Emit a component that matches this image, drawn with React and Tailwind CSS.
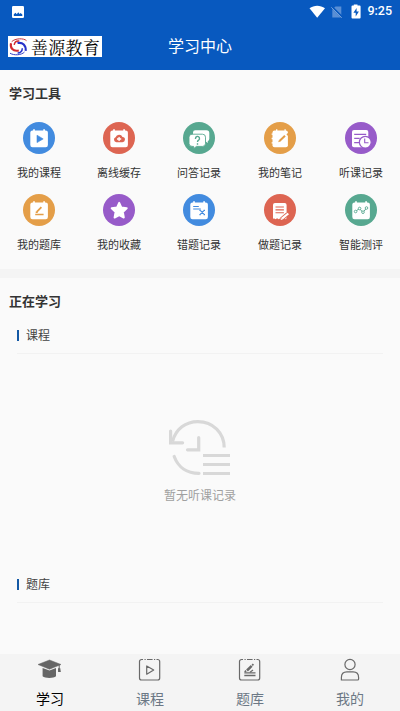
import React from "react";

const BLUE = "#428bdf";
const RED = "#dd6552";
const GREEN = "#57a890";
const ORANGE = "#e49e48";
const PURPLE = "#975bc9";

function Disc({ color, children }) {
  return (
    <svg width="32" height="32" viewBox="0 0 32 32" fill="none" className="block">
      <circle cx="16" cy="16" r="16" fill={color} />
      {children}
    </svg>
  );
}

function Calendar() {
  return (
    <>
      <rect x="7.3" y="8.6" width="17.6" height="16.7" rx="2.2" fill="#fff" />
      <path d="M11 7.2v2.4M21.1 7.2v2.4" stroke="#fff" strokeWidth="1.7" />
    </>
  );
}

const tools = [
  {
    label: "我的课程",
    icon: (
      <Disc color={BLUE}>
        <Calendar />
        <path d="M14 13.2v7.4l6.2-3.7z" fill={BLUE} stroke={BLUE} strokeWidth=".6" strokeLinejoin="round" />
      </Disc>
    ),
  },
  {
    label: "离线缓存",
    icon: (
      <Disc color={RED}>
        <Calendar />
        <path d="M13.4 20.3a2.6 2.6 0 0 1-.8-5 3.7 3.7 0 0 1 6.9-.2 2.6 2.6 0 0 1-.3 5.2z" fill={RED} />
        <path d="M16.1 14.9v4.2M14 17h4.2" stroke="#fff" strokeWidth="1.3" />
      </Disc>
    ),
  },
  {
    label: "问答记录",
    icon: (
      <Disc color={GREEN}>
        <path d="M12.2 8.2h11.3a2.8 2.8 0 0 1 2.8 2.8v5.8a2.8 2.8 0 0 1-1.6 2.5l.2 1.8-3-2.1H10V10.4a2.2 2.2 0 0 1 2.2-2.2z" fill="#fff" />
        <path d="M9 12.2h10.5a3 3 0 0 1 3 3v6.2a3 3 0 0 1-3 3h-6.1l-2.5 2.1-.3-2.1H9a3 3 0 0 1-3-3v-6.2a3 3 0 0 1 3-3z" fill="#fff" stroke={GREEN} strokeWidth=".9" />
        <path d="M12.5 17v-.4a2 2 0 1 1 3.1 1.5c-.8.5-1.1.8-1.1 1.8M14.5 21.2v1.6" stroke={GREEN} strokeWidth="1.4" />
      </Disc>
    ),
  },
  {
    label: "我的笔记",
    icon: (
      <Disc color={ORANGE}>
        <rect x="8.5" y="8.5" width="15.4" height="16.8" rx="2" fill="#fff" />
        <path d="M12.7 7.2v2.4M21.1 7.2v2.4M7.6 12.2h3M7.6 16.5h3M7.6 20.8h3" stroke="#fff" strokeWidth="1.3" />
        <path d="M15.5 18.9l5.5-5.1" stroke={ORANGE} strokeWidth="2" />
        <path d="M14.2 20.2l.7-2 1.4 1.4zM22.4 12.3l1.6-1.4v3z" fill={ORANGE} />
      </Disc>
    ),
  },
  {
    label: "听课记录",
    icon: (
      <Disc color={PURPLE}>
        <rect x="7" y="8.1" width="16.3" height="17.1" rx="2" fill="#fff" />
        <path d="M9.2 12.3h12M9.2 16.4h5.5M9.2 20.7h4.8" stroke={PURPLE} strokeWidth="1.2" />
        <circle cx="20.3" cy="20.2" r="5.9" fill="#fff" stroke={PURPLE} strokeWidth="1.2" />
        <path d="M19.7 16.5v4.2h3.8" stroke={PURPLE} strokeWidth="1.1" />
      </Disc>
    ),
  },
  {
    label: "我的题库",
    icon: (
      <Disc color={ORANGE}>
        <Calendar />
        <path d="M13.8 17.9l4.6-4.8" stroke={ORANGE} strokeWidth="1.8" />
        <path d="M12.7 18.3h2M12.2 20.4h8.4" stroke={ORANGE} strokeWidth="1.5" />
      </Disc>
    ),
  },
  {
    label: "我的收藏",
    icon: (
      <Disc color={PURPLE}>
        <path d="M16.2 8.9l2.2 4.7 5.3.7-3.9 3.6 1 5.6-4.6-2.3-4.6 2.3 1-5.6-3.9-3.6 5.3-.7z" fill="#fff" stroke="#fff" strokeWidth="2" strokeLinejoin="round" />
      </Disc>
    ),
  },
  {
    label: "错题记录",
    icon: (
      <Disc color={BLUE}>
        <Calendar />
        <path d="M10.2 12.5h5.6M10.2 15h7.6" stroke={BLUE} strokeWidth="1.1" />
        <path d="M17 16.2l4.4 4.4M21.4 16.2L17 20.6M16.4 16.3h1.4M20.6 16.3h1.4M16.4 20.7h1.4M20.6 20.7h1.4" stroke={BLUE} strokeWidth="1.2" />
      </Disc>
    ),
  },
  {
    label: "做题记录",
    icon: (
      <Disc color={RED}>
        <path d="M11 9h9.6a2 2 0 0 1 2 2v13.2l-1.5 1-1.6-1-1.6 1-1.6-1-1.6 1-1.6-1-1.6 1-1.6-1-.9.9V11a2 2 0 0 1 2-2z" fill="#fff" />
        <path d="M11.5 13h8.4M11.5 15.9h8.4M11.5 18.8h8.4" stroke={RED} strokeWidth="1.1" />
        <path d="M17.4 25.2l6.2-5.2" stroke={RED} strokeWidth="4" />
        <path d="M18 24.7l6.3-5.2" stroke="#fff" strokeWidth="2.2" />
        <path d="M16.6 26l.7-2 1.4 1.6z" fill="#fff" />
      </Disc>
    ),
  },
  {
    label: "智能测评",
    icon: (
      <Disc color={GREEN}>
        <Calendar />
        <path d="M11.2 16.8l2.8-1.8M15.3 15.3l2 2.6M18.8 17.5l2-2.6" stroke={GREEN} strokeWidth="1" />
        <g stroke={GREEN} strokeWidth=".9" fill="#fff">
          <circle cx="10.6" cy="17.5" r="1.3" />
          <circle cx="14.6" cy="14.5" r="1.3" />
          <circle cx="18" cy="18.2" r="1.3" />
          <circle cx="21.5" cy="14" r="1.3" />
        </g>
      </Disc>
    ),
  },
];

function StatusBar() {
  return (
    <div className="flex h-[23px] items-center pl-3 pr-2 text-white">
      <svg width="12" height="12" viewBox="0 0 12 12" className="block">
        <rect width="12" height="12" rx="1.2" fill="#fff" />
        <path d="M1.8 10V8.3l1.7-1.5 1.3 1.4 1.5-2 1.3 1.7 1-1 1.7 1.7V10z" fill="#0859bf" />
      </svg>
      <svg width="52" height="16" viewBox="0 0 52 16" className="ml-auto mr-[6px] block">
        <path d="M.5 4.3C5 .8 11.4.8 16 4.3L8.2 13.8z" fill="#fff" />
        <path d="M26.5 2.5h5.8v11h-9v-8z" fill="#5a8fd5" />
        <path d="M22.8 2.8L34 14" stroke="#0859bf" strokeWidth="2.2" />
        <path d="M22.3 3.3l10.5 10.5" stroke="#72a0dc" strokeWidth="1" />
        <path d="M44.8.5h3.7v1h2.1a1 1 0 0 1 1 1v11a1 1 0 0 1-1 1h-7.1a1 1 0 0 1-1-1v-11a1 1 0 0 1 1-1h1.3z" fill="#fff" />
        <path d="M47.6 4l-3.2 4.7h2.3v3.8l3.2-5.1h-2.3z" fill="#0859bf" />
      </svg>
      <span className="font-[Roboto,sans-serif] text-[12.5px] font-medium leading-none">9:25</span>
    </div>
  );
}

function Logo() {
  return (
    <div className="flex h-[21px] w-[94px] items-center bg-white pl-[1px] text-black">
      <svg width="19" height="19" viewBox="0 0 19 19" fill="none" className="block shrink-0">
        <path d="M17.5 3.7C14.8.9 6 1.2 2.7 4.7" stroke="#c8323c" strokeWidth="1" />
        <path d="M2 6.2c-1 4.5 1.7 8.7 7.8 7.3" stroke="#d22b32" strokeWidth="2.1" />
        <path d="M5.2 7.8C5.7 5 8 3.700 10.3 4" stroke="#d22b32" strokeWidth="1.5" />
        <path d="M1 16.2c4 2.5 11.5 2 14.5-1.2" stroke="#3440c8" strokeWidth="1" />
        <path d="M8.5 6.1c5.3-1.200 8.600 2.500 8.200 7.800" stroke="#2732c9" strokeWidth="2.1" />
        <path d="M13.300 11.200c0 3-2 5-4.700 4.900" stroke="#2732c9" strokeWidth="1.500" />
      </svg>
      <span className="ml-[3px] whitespace-nowrap font-['Noto_Serif_CJK_SC','Noto_Sans_CJK_SC',serif] text-[17px] font-normal leading-[20px] tracking-[0.3px]">善源教育</span>
    </div>
  );
}

function Section({ title }) {
  return (
    <div className="mx-[17px] flex h-9 items-center border-b border-[#f2f2f2]">
      <span className="h-[11px] w-[2px] bg-[#1459a5]" />
      <span className="ml-[7px] pb-[1px] text-[12px] leading-none text-[#444]">{title}</span>
    </div>
  );
}

function EmptyIcon() {
  return (
    <svg width="64" height="58" viewBox="0 0 64 58" fill="none" stroke="#d8d8d8" strokeWidth="3.2" className="block">
      <path d="M4.5 22.5C8 10 17.500 2.600 30 2.600c15 0 26.200 11.400 26.200 25.900" />
      <path d="M2.600 12v11.800h12" strokeLinecap="round" />
      <path d="M6.200 37.500C10 48 19 54.300 31 54.300" strokeLinecap="round" />
      <path d="M30.700 18.500v12.300H19.500" strokeLinecap="round" />
      <path d="M35 36.500h27M35 45.500h27M35 54.500h27" />
    </svg>
  );
}

function FrameIcon({ children }) {
  return (
    <svg width="24" height="24" viewBox="0 0 24 24" fill="none" stroke="#696969" strokeWidth="1.2" className="block">
      <path d="M5 2.500H3.500a2 2 0 0 0-2 2V21a2 2 0 0 0 2 2h16.200a2 2 0 0 0 2-2V4.500a2 2 0 0 0-2-2h-1.200M6.500 2.500h1.200M9 2.500h5.600M16 2.500h1.200" />
      {children}
    </svg>
  );
}

const tabs = [
  {
    label: "学习",
    icon: (
      <svg width="24" height="24" viewBox="0 0 24 24" fill="#666" className="block">
        <path d="M0 7.500L11.500 3 23 7.500l-11.500 4.700z" stroke="#666" strokeWidth=".5" strokeLinejoin="round" />
        <path d="M4.600 11l6.900 2.500 6.500-2.500v8.200c-2.300 2.300-11 2.300-13.400 0z" />
        <path d="M21.200 8v6" stroke="#666" strokeWidth="1" />
        <path d="M20 11.300h2.300l.5 3.600h-2.700z" />
      </svg>
    ),
  },
  {
    label: "课程",
    icon: (
      <FrameIcon>
        <path d="M8.700 9v8.200l7-4.100z" strokeLinejoin="round" />
      </FrameIcon>
    ),
  },
  {
    label: "题库",
    icon: (
      <FrameIcon>
        <path d="M9 13.500l4.700-4.600" strokeWidth="2.500" />
        <path d="M14.200 8.300l1.200-1.100M6.800 15l1.300-1.400" strokeWidth="1.800" />
        <path d="M6.300 15.800h11.200M6.300 18.500h11.200" strokeWidth="1.300" />
        <path d="M12 15.300l3-2.200" />
      </FrameIcon>
    ),
  },
  {
    label: "我的",
    icon: (
      <svg width="24" height="24" viewBox="0 0 24 24" fill="none" stroke="#696969" strokeWidth="1.2" className="block">
        <circle cx="12" cy="7.500" r="5.100" />
        <path d="M3.400 23v-2.500c0-3.600 2.400-5.600 5.500-5.600h6.200c3.100 0 5.500 2 5.500 5.600V22a1 1 0 0 1-1 1z" />
      </svg>
    ),
  },
];

export default function App() {
  return (
    <div className="flex h-[711px] w-[400px] flex-col overflow-hidden bg-[#fafafa] font-['Noto_Sans_CJK_SC',sans-serif] text-[#333]">
      <header className="h-[70px] shrink-0 bg-[#0859bf]">
        <StatusBar />
        <div className="grid h-[47px] grid-cols-[1fr_64px_1fr] items-center pl-2">
          <Logo />
          <h1 className="-ml-1 whitespace-nowrap pb-[3px] text-[16px] leading-none text-white">学习中心</h1>
        </div>
      </header>

      <section className="h-[199px] shrink-0">
        <h2 className="h-[52px] pl-[9px] pt-[10px] text-[13px] font-bold leading-[26px]">学习工具</h2>
        <div className="grid grid-cols-[80px_80px_81px_81px_44px] pl-[17px]">
          {tools.map((tool) => (
            <div key={tool.label} className="flex h-[72px] w-11 flex-col items-center">
              {tool.icon}
              <span className="mt-[9px] whitespace-nowrap text-[11px] leading-[18px]">{tool.label}</span>
            </div>
          ))}
        </div>
      </section>

      <div className="h-[9px] shrink-0 bg-[#f4f4f4]" />

      <main className="flex-1">
        <h2 className="h-10 pl-[9px] pt-[10px] text-[13px] font-bold leading-[26px]">正在学习</h2>
        <Section title="课程" />
        <div className="flex h-[213px] flex-col items-center pt-[65px]">
          <EmptyIcon />
          <p className="mt-[9px] text-[12px] leading-[18px] text-[#a0a0a0]">暂无听课记录</p>
        </div>
        <Section title="题库" />
      </main>

      <nav className="grid h-[57px] shrink-0 grid-cols-4 bg-[#f4f4f4]">
        {tabs.map((tab, i) => (
          <div key={tab.label} className="flex flex-col items-center pt-[3px]">
            {tab.icon}
            <span className={i === 0 ? "mt-[7px] text-[14px] leading-5 text-black" : "mt-[7px] text-[14px] leading-5 text-[#6c7885]"}>{tab.label}</span>
          </div>
        ))}
      </nav>
    </div>
  );
}
